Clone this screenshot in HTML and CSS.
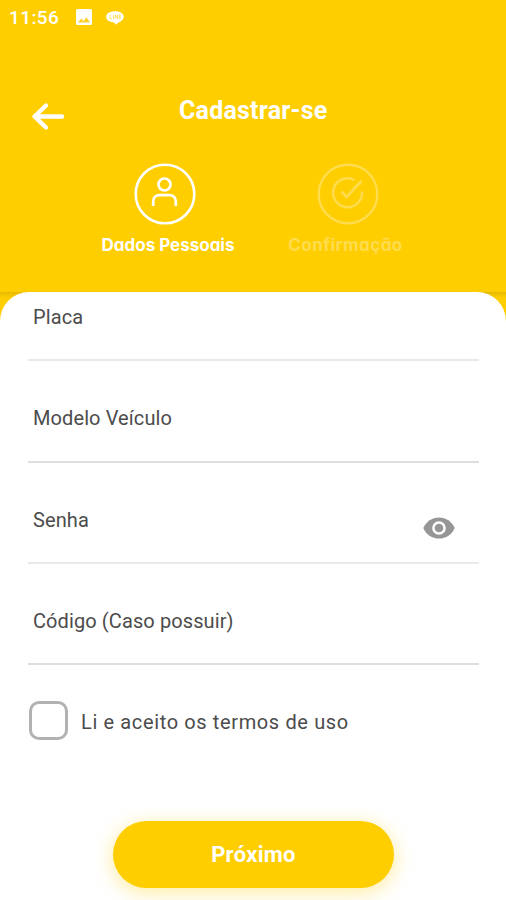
FILE: index.html
```html
<!DOCTYPE html>
<html lang="pt-BR">
<head>
<meta charset="utf-8">
<title>Cadastrar-se</title>
<link rel="stylesheet" href="styles.css">
</head>
<body>
<div class="screen">
  <header class="header">
    <div class="status">
      <span class="time">11:56</span>
      <svg class="photo" width="16" height="16" viewBox="0 0 16 16"><rect width="16" height="16" rx="1.5" fill="#fff"/><path d="M2 13.5l3.2-4 2.3 2.500 3-3.800 3.500 5.300z" fill="#ffd02a"/></svg>
      <svg class="chat" width="18" height="14" viewBox="0 0 18 14"><path d="M9 .3c5 0 8.800 2.300 8.800 5.500 0 3.500-4.800 5.500-8.800 8-.2-1 .1-1.900-.8-2.300C3.500 11.200.2 9 .2 5.800.2 2.600 4 .3 9 .3z" fill="#fff"/><path d="M4 3.800v4h2M7.500 3.800v4M9.300 7.800v-4l2.200 4v-4M15 3.800h-1.800v4H15M13.200 5.800H15" fill="none" stroke="#ffdc5c" stroke-width=".9"/></svg>
    </div>
    <div class="topbar">
      <svg class="back" width="34" height="30" viewBox="0 0 34 30"><path d="M31 14.500H3.500M15 3.500L3.500 14.500l11.500 11" fill="none" stroke="#fff" stroke-width="4.400" stroke-linecap="round" stroke-linejoin="round"/></svg>
      <h1 class="title">Cadastrar-se</h1>
    </div>
    <div class="steps">
      <div class="step">
        <svg width="62" height="62" viewBox="0 0 62 62" fill="none" stroke="#fff"><circle cx="31" cy="31" r="29.300" stroke-width="2.600"/><circle cx="30.500" cy="21.500" r="6" stroke-width="2.700"/><path d="M19.200 43v-4.500c0-4 2.800-6.300 6.500-6.300h9.600c3.700 0 6.500 2.300 6.500 6.300V43" stroke-width="2.700"/></svg>
        <span class="step-label">Dados Pessoais</span>
      </div>
      <div class="step step-idle">
        <svg width="62" height="62" viewBox="0 0 62 62" fill="none" stroke="#fff"><circle cx="31" cy="31" r="29.300" stroke-width="2.400"/><path d="M37.500 17A14.500 14.500 0 1 0 45 28.500" stroke-width="2.500"/><path d="M24.500 28.500l5 5.500L44.500 18" stroke-width="2.700"/></svg>
        <span class="step-label">Confirmação</span>
      </div>
    </div>
  </header>
  <main class="body">
    <form class="sheet">
      <div class="field soft"><span class="label">Placa</span></div>
      <div class="field"><span class="label">Modelo Veículo</span></div>
      <div class="field soft"><span class="label">Senha</span>
        <svg class="eye" width="32" height="22" viewBox="0 0 32 22"><path d="M16 .4C9 .4 3 4.500.3 11 3 17.500 9 21.600 16 21.600S29 17.500 31.700 11C29 4.500 23 .4 16 .4z" fill="#969696"/><circle cx="16" cy="11" r="5.600" fill="#969696" stroke="#fff" stroke-width="2.500"/></svg>
      </div>
      <div class="field"><span class="label">Código (Caso possuir)</span></div>
      <div class="terms"><span class="box"></span><span class="label">Li e aceito os termos de uso</span></div>
      <button class="next" type="button">Próximo</button>
    </form>
  </main>
</div>
</body>
</html>
```
FILE: styles.css
```css
* { box-sizing: border-box; }
body { margin: 0; background: #fff; font-family: Roboto, "Liberation Sans", sans-serif; }
.screen { width: 506px; height: 900px; overflow: hidden; display: flex; flex-direction: column; }
.header { height: 292px; flex: none; background: #ffce00; color: #fff; }
.status { height: 36px; padding: 0 9px; display: flex; align-items: center; }
.time { width: 67px; font-size: 19px; font-weight: 500; letter-spacing: .4px; line-height: 36px; }
.photo { margin-top: -2px; }
.chat { margin-left: 14px; margin-top: -1px; }
.topbar { height: 110px; padding: 50px 0 0 31px; display: flex; }
.back { margin-top: 16px; }
.title { margin: 10px 0 0 114px; font-size: 25px; line-height: 30px; font-weight: 700; letter-spacing: .2px; white-space: nowrap; }
.steps { display: flex; padding: 17px 0 0 75px; }
.step { width: 180px; display: flex; flex-direction: column; align-items: center; }
.step-idle { opacity: .3; margin-left: 3px; }
.step-label { margin-top: 9px; margin-left: 6px; font-family: Inter, "Open Sans", sans-serif; font-feature-settings: "cv11"; font-size: 17px; line-height: 22px; font-weight: 700; white-space: nowrap; }
.step-idle .step-label { margin-left: -5px; letter-spacing: .45px; }
.body { flex: 1; background: linear-gradient(#e6b900, #f3c400 3px, #ffce00 6px, #ffce00 40px, #fff 40px); }
.sheet { height: 100%; background: #fff; border-radius: 29px 29px 0 0; padding: 0 27px 0 28px; }
.field { display: flex; align-items: flex-start; justify-content: space-between; height: 101px; padding: 43px 24px 0 5px; border-bottom: 2px solid #dedede; }
.field.soft { border-bottom-color: #e9e9e9; }
.field:first-child { height: 69px; padding-top: 11px; }
.field:nth-child(2) { height: 102px; }
.label { font-size: 20px; line-height: 28px; color: #4c4c4c; white-space: nowrap; letter-spacing: .1px; }
.eye { margin-top: 11px; }
.terms { display: flex; align-items: center; height: 40px; margin-top: 35px; }
.box { width: 39px; height: 39px; border: 3px solid #b2b2b2; border-radius: 10px; margin: 0 13px 0 1px; }
.terms .label { padding-top: 4px; letter-spacing: .63px; }
.next { display: block; width: 281px; height: 67px; margin: 81px 0 0 85px; padding: 0; border: 0; border-radius: 34px; background: #ffce00; box-shadow: 0 4px 20px rgba(255, 206, 0, .4); color: #fff; font-family: inherit; font-size: 22px; font-weight: 700; letter-spacing: .3px; }
```
